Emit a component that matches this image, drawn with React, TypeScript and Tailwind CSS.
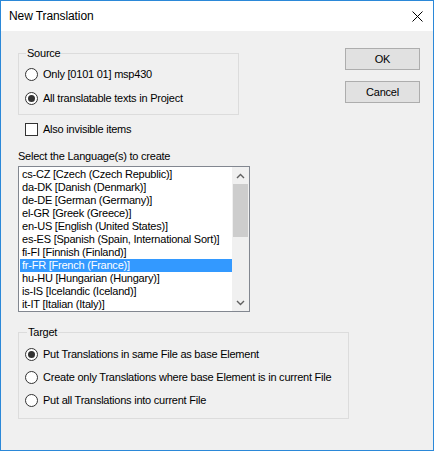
import React from "react";

const languages = [
  "cs-CZ [Czech (Czech Republic)]",
  "da-DK [Danish (Denmark)]",
  "de-DE [German (Germany)]",
  "el-GR [Greek (Greece)]",
  "en-US [English (United States)]",
  "es-ES [Spanish (Spain, International Sort)]",
  "fi-FI [Finnish (Finland)]",
  "fr-FR [French (France)]",
  "hu-HU [Hungarian (Hungary)]",
  "is-IS [Icelandic (Iceland)]",
  "it-IT [Italian (Italy)]",
];

function Radio({ checked, label }: { checked?: boolean; label: string }) {
  return (
    <div className="flex items-center h-[16px] gap-[5px]">
      <div className="w-[13px] h-[13px] rounded-full border border-[#333333] bg-white flex items-center justify-center shrink-0">
        {checked && <div className="w-[7px] h-[7px] rounded-full bg-[#333333]" />}
      </div>
      <span className="leading-[13px] whitespace-nowrap">{label}</span>
    </div>
  );
}

function Chevron({ up }: { up?: boolean }) {
  return (
    <svg width="9" height="6" viewBox="0 0 9 6">
      <path
        d={up ? "M1 5 L4.5 1.5 L8 5" : "M1 1 L4.5 4.5 L8 1"}
        fill="none"
        stroke="#606060"
        strokeWidth="1.4"
      />
    </svg>
  );
}

export default function App() {
  return (
    <div className="w-[434px] h-[451px] border border-[#2b88d8] bg-[#f0f0f0] flex flex-col font-['Liberation_Sans',Arial,sans-serif] text-[11px] tracking-[-0.23px] text-black">
      <div className="h-[30px] bg-white flex items-center justify-between pl-[8px] pr-[10px] shrink-0">
        <span className="text-[12px] tracking-[-0.1px]">New Translation</span>
        <svg width="11" height="11" viewBox="0 0 11 11">
          <path d="M0.5 0.5 L10.5 10.5 M10.5 0.5 L0.5 10.5" stroke="#000" strokeWidth="1" />
        </svg>
      </div>
      <div className="flex-1 pl-[17px] pt-[17px]">
        <div className="flex">
          <div className="w-[221px] mt-[5px]">
            <div className="relative border border-[#dcdcdc] h-[62px] pl-[6px] pt-[12px] flex flex-col gap-[8px]">
              <span className="absolute left-[7px] -top-[7px] px-[1px] bg-[#f0f0f0] leading-[13px]">Source</span>
              <Radio label="Only [0101 01] msp430" />
              <Radio checked label="All translatable texts in Project" />
            </div>
            <div className="mt-[6px] h-[16px] pl-[7px] flex items-center gap-[5px]">
              <div className="w-[13px] h-[13px] border border-[#333333] bg-white" />
              <span className="leading-[13px]">Also invisible items</span>
            </div>
          </div>
          <div className="ml-[106px] flex flex-col gap-[11px]">
            <button className="w-[75px] h-[22px] bg-[#e1e1e1] border border-[#adadad] flex items-center justify-center leading-[13px]">OK</button>
            <button className="w-[75px] h-[22px] bg-[#e1e1e1] border border-[#adadad] flex items-center justify-center leading-[13px]">Cancel</button>
          </div>
        </div>
        <div className="mt-[13px] leading-[13px] h-[13px]">Select the Language(s) to create</div>
        <div className="mt-[3px] w-[232px] h-[146px] border border-[#828790] bg-white flex">
          <div className="flex-1 pl-[1px] pt-[1px] overflow-hidden">
            {languages.map((l) => {
              const sel = l.startsWith("fr-FR");
              return (
                <div
                  key={l}
                  className={
                    sel
                      ? "h-[13px] leading-[13px] pl-[2px] whitespace-nowrap bg-[#3399ff] text-white"
                      : "h-[13px] leading-[13px] pl-[2px] whitespace-nowrap"
                  }
                >
                  {l}
                </div>
              );
            })}
          </div>
          <div className="w-[17px] bg-[#f0f0f0] flex flex-col">
            <div className="h-[17px] flex items-center justify-center">
              <Chevron up />
            </div>
            <div className="flex-1">
              <div className="mx-[1px] h-[53px] bg-[#cdcdcd]" />
            </div>
            <div className="h-[17px] flex items-center justify-center">
              <Chevron />
            </div>
          </div>
        </div>
        <div className="mt-[20px] relative w-[331px] h-[87px] border border-[#dcdcdc] pl-[6px] pt-[13px] flex flex-col gap-[7px]">
          <span className="absolute left-[8px] -top-[7px] px-[1px] bg-[#f0f0f0] leading-[13px]">Target</span>
          <Radio checked label="Put Translations in same File as base Element" />
          <Radio label="Create only Translations where base Element is in current File" />
          <Radio label="Put all Translations into current File" />
        </div>
      </div>
    </div>
  );
}
